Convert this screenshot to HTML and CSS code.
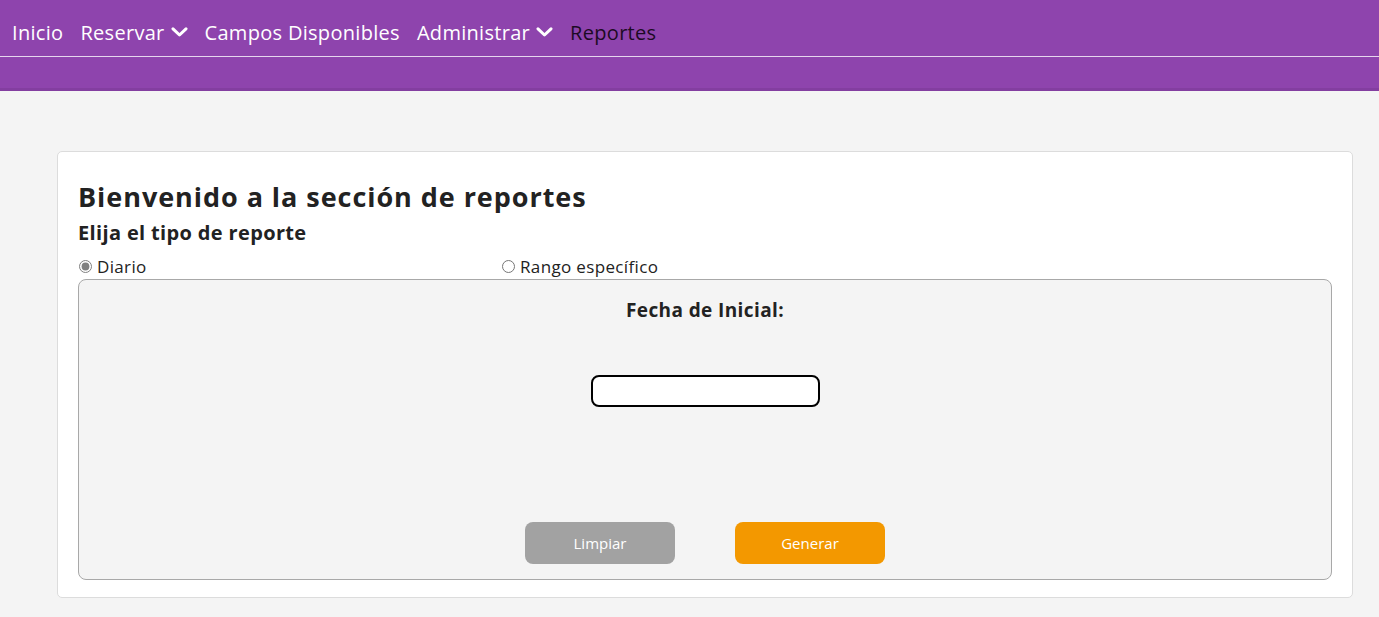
FILE: index.html
```html
<!DOCTYPE html>
<html lang="es">
<head>
<meta charset="utf-8">
<title>Reportes</title>
<link rel="stylesheet" href="styles.css">
</head>
<body>
<header class="topbar">
  <nav class="nav">
    <a class="nav-link" href="#">Inicio</a>
    <a class="nav-link" href="#">Reservar <svg class="chev" viewBox="0 0 17 10" width="17" height="10"><path d="M2 1.8 L8.5 8 L15 1.8" fill="none" stroke="currentColor" stroke-width="3" stroke-linecap="round" stroke-linejoin="round"/></svg></a>
    <a class="nav-link" href="#">Campos Disponibles</a>
    <a class="nav-link" href="#">Administrar <svg class="chev" viewBox="0 0 17 10" width="17" height="10"><path d="M2 1.8 L8.5 8 L15 1.8" fill="none" stroke="currentColor" stroke-width="3" stroke-linecap="round" stroke-linejoin="round"/></svg></a>
    <a class="nav-link active" href="#">Reportes</a>
  </nav>
  <div class="subbar"></div>
</header>
<main class="main">
  <section class="card">
    <h1 class="title">Bienvenido a la sección de reportes</h1>
    <h2 class="subtitle">Elija el tipo de reporte</h2>
    <div class="radios">
      <label class="radio"><input type="radio" name="tipo" checked> Diario</label>
      <label class="radio"><input type="radio" name="tipo"> Rango específico</label>
    </div>
    <div class="panel">
      <label class="field-label" for="fecha">Fecha de Inicial:</label>
      <input class="field" id="fecha" type="text">
      <div class="actions">
        <button class="btn btn-gray" type="button">Limpiar</button>
        <button class="btn btn-orange" type="button">Generar</button>
      </div>
    </div>
  </section>
</main>
</body>
</html>
```
FILE: styles.css
```css
* { box-sizing: border-box; }
html, body { margin: 0; padding: 0; }
body {
  background: #f4f4f4;
  font-family: "Open Sans", Lato, sans-serif;
  color: #222;
}
.topbar {
  background: #8e44ad;
  border-bottom: 3px solid #833ea0;
}
.nav {
  display: flex;
  align-items: center;
  gap: 17px;
  height: 57px;
  padding: 0 12px;
  border-bottom: 1px solid #e6d6ee;
}
.nav-link {
  color: #fff;
  text-decoration: none;
  font-size: 20px;
  letter-spacing: 0.3px;
  display: flex;
  align-items: center;
  gap: 6px;
  padding-top: 8px;
}
.nav-link.active { color: #1c0a24; }
.chev { display: block; margin-top: -1px; }
.subbar { height: 31px; }
.main {
  padding: 60px 26px 20px 57px;
}
.card {
  background: #fff;
  border: 1px solid #dcdcdc;
  border-radius: 5px;
  padding: 25px 20px 17px 20px;
}
.title {
  margin: 0;
  font-size: 27px;
  letter-spacing: 0.95px;
  font-weight: 700;
  line-height: 40px;
  color: #222;
}
.subtitle {
  margin: 2px 0 0;
  font-size: 20px;
  letter-spacing: 0.35px;
  font-weight: 700;
  line-height: 28px;
  color: #222;
}
.radios {
  display: flex;
  margin-top: 8px;
  margin-bottom: 2px;
  height: 22px;
  align-items: center;
}
.radio {
  width: 423px;
  font-size: 17px;
  letter-spacing: 0.35px;
  display: flex;
  align-items: center;
  gap: 5px;
  padding-left: 1px;
}
.radio input {
  margin: 0;
  width: 13px;
  height: 13px;
  accent-color: #808080;
}
.panel {
  background: #f4f4f4;
  border: 1px solid #a8a8a8;
  border-radius: 8px;
  height: 301px;
  display: flex;
  flex-direction: column;
  align-items: center;
  padding-top: 17px;
}
.field-label {
  font-size: 19px;
  letter-spacing: 0.4px;
  font-weight: 700;
  line-height: 26px;
  color: #222;
}
.field {
  margin-top: 52px;
  width: 229px;
  height: 32px;
  border: 2px solid #000;
  border-radius: 8px;
  background: #fff;
}
.actions {
  margin-top: 115px;
  display: flex;
  gap: 60px;
}
.btn {
  width: 150px;
  height: 42px;
  border: none;
  border-radius: 8px;
  color: #fff;
  font-family: "Open Sans", Lato, sans-serif;
  font-size: 15px;
}
.btn-gray { background: #a2a2a2; }
.btn-orange { background: #f39800; }
```
